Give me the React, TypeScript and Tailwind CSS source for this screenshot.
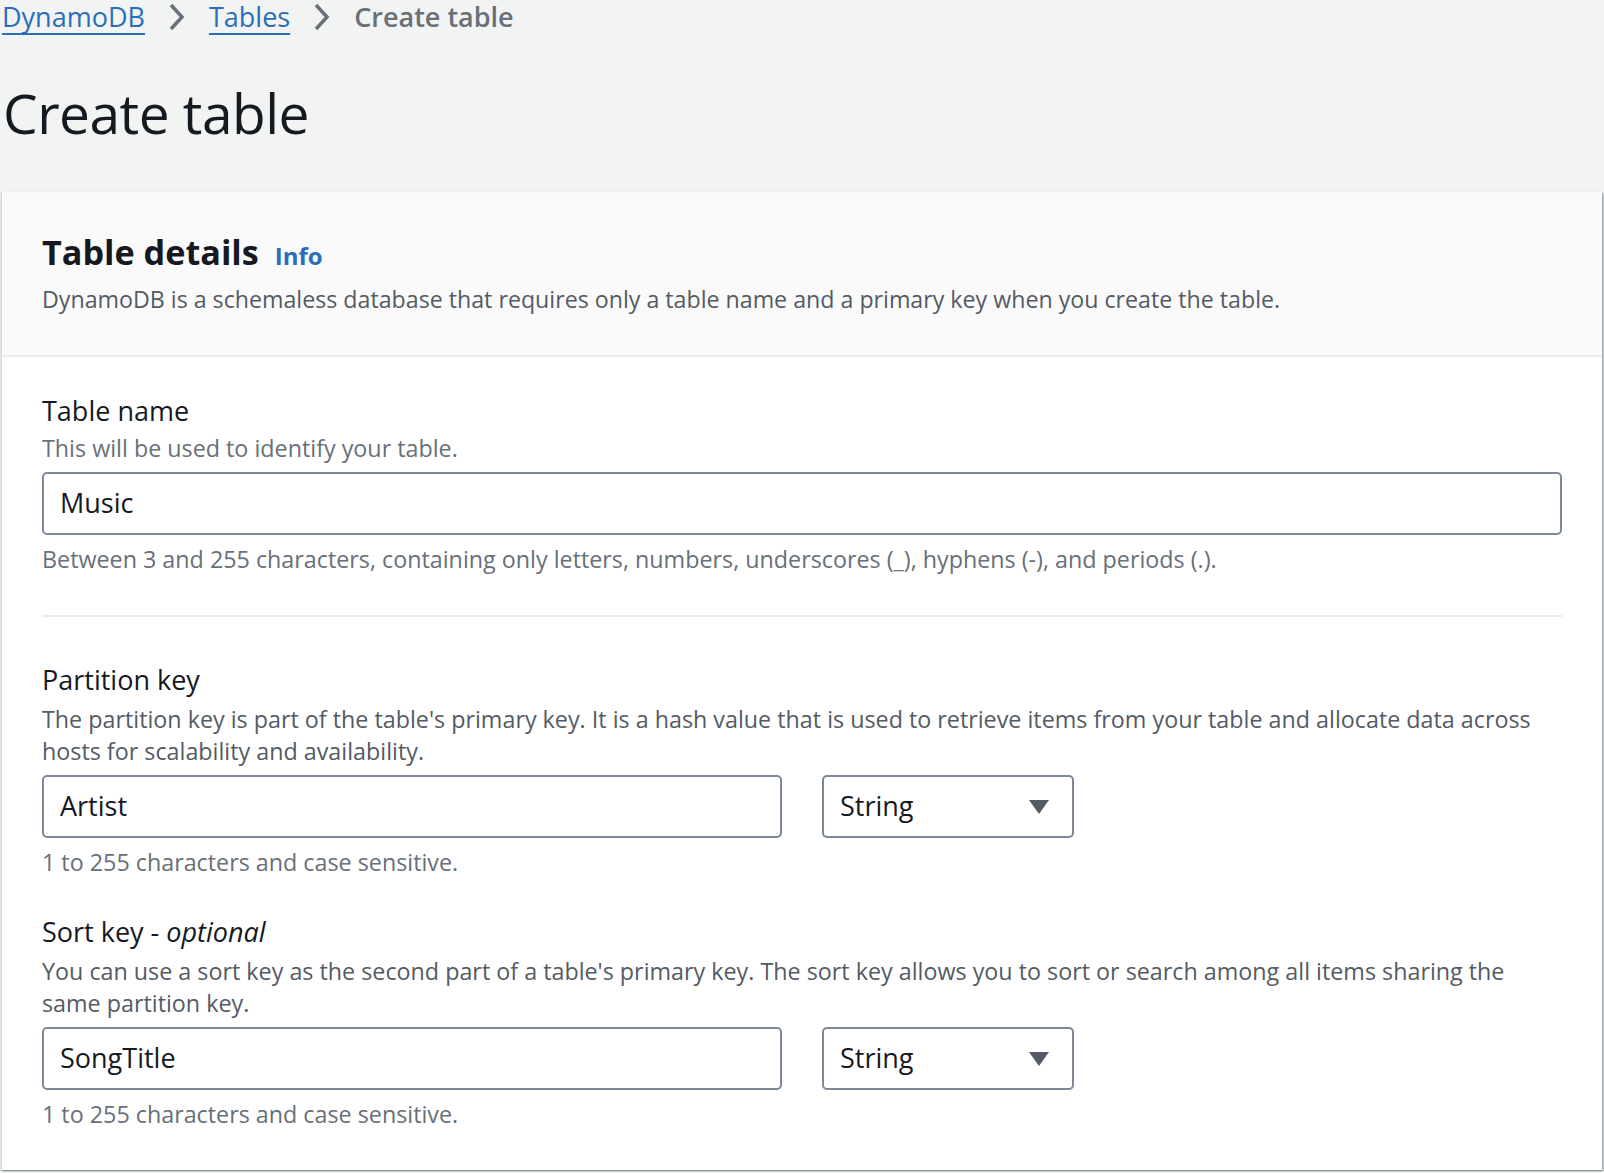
import React from 'react';

const font = { fontFamily: '"Open Sans", "Noto Sans", Arial, sans-serif' };

const Chevron = () => (
  <svg width="20" height="32" viewBox="0 0 20 32" className="shrink-0">
    <path d="M4 4 L15 16 L4 28" fill="none" stroke="#687078" strokeWidth="3.5" />
  </svg>
);

const Caret = () => (
  <svg width="22" height="16" viewBox="0 0 22 16">
    <path d="M1 1 H21 L11 15 Z" fill="#545b64" />
  </svg>
);

const TextInput = ({ value, className = '' }: { value: string; className?: string }) => (
  <div
    className={`h-[63px] border-2 border-[#7d8998] rounded-[5px] bg-white flex items-center px-[16px] text-[27px] text-[#16191f] ${className}`}
  >
    {value}
  </div>
);

const SelectBox = ({ value }: { value: string }) => (
  <div className="h-[63px] w-[252px] border-2 border-[#7d8998] rounded-[5px] bg-white flex items-center justify-between pl-[16px] pr-[22px] text-[27px] text-[#16191f]">
    <span>{value}</span>
    <Caret />
  </div>
);

const KeyField = ({
  label,
  desc,
  value,
}: {
  label: React.ReactNode;
  desc: string;
  value: string;
}) => (
  <div className="flex flex-col">
    <div className="text-[27px] leading-[38px] text-[#16191f]">{label}</div>
    <p className="text-[23.3px] leading-[32px] text-[#545b64] mt-[4px]">{desc}</p>
    <div className="flex gap-[40px] mt-[8px]">
      <TextInput value={value} className="w-[740px]" />
      <SelectBox value="String" />
    </div>
    <p className="text-[23.3px] leading-[32px] text-[#687078] mt-[8px]">1 to 255 characters and case sensitive.</p>
  </div>
);

export default function App() {
  return (
    <div className="min-h-screen bg-[#f2f3f3] overflow-hidden" style={font}>
      {/* breadcrumb */}
      <nav className="flex items-center gap-[22px] h-[34px] px-[2px] text-[27px]">
        <a className="text-[#2a6ebb] underline underline-offset-[6px] decoration-2 leading-[32px]">DynamoDB</a>
        <Chevron />
        <a className="text-[#2a6ebb] underline underline-offset-[6px] decoration-2 leading-[32px]">Tables</a>
        <Chevron />
        <span className="text-[#687078] font-semibold leading-[32px]">Create table</span>
      </nav>

      <h1 className="text-[55px] leading-[72px] text-[#16191f] mt-[43px] px-[3px] -tracking-[0.5px]">Create table</h1>

      <section className="mt-[43px] ml-[1px] w-[1601px] bg-white border-l border-[#d5dbdb] shadow-[2px_1px_2px_rgba(0,28,36,0.3),0_1px_1px_rgba(0,28,36,0.3)] pb-[40px]">
        <header className="bg-[#fafafa] border-b-2 border-[#eaeded] px-[40px] pt-[38px] pb-[38px]">
          <div className="flex items-baseline gap-[16px]">
            <h2 className="text-[34.2px] leading-[44px] font-bold text-[#16191f]">Table details</h2>
            <a className="text-[24px] font-bold text-[#2a6ebb]">Info</a>
          </div>
          <p className="text-[23.2px] leading-[36px] text-[#545b64] mt-[7px]">
            DynamoDB is a schemaless database that requires only a table name and a primary key when you create the table.
          </p>
        </header>

        <div className="px-[40px] pt-[35px]">
          <div className="flex flex-col">
            <div className="text-[27px] leading-[38px] text-[#16191f]">Table name</div>
            <p className="text-[23.3px] leading-[31px] text-[#687078] mt-[3px]">This will be used to identify your table.</p>
            <TextInput value="Music" className="mt-[8px] w-full" />
            <p className="text-[23.3px] leading-[32px] text-[#687078] mt-[8px]">
              Between 3 and 255 characters, containing only letters, numbers, underscores (_), hyphens (-), and periods (.).
            </p>
          </div>

          <div className="border-t-2 border-[#eaeded] mt-[40px] mb-[44px]" />

          <KeyField
            label="Partition key"
            desc="The partition key is part of the table's primary key. It is a hash value that is used to retrieve items from your table and allocate data across hosts for scalability and availability."
            value="Artist"
          />

          <div className="mt-[35px]">
            <KeyField
              label={
                <>
                  Sort key - <i>optional</i>
                </>
              }
              desc="You can use a sort key as the second part of a table's primary key. The sort key allows you to sort or search among all items sharing the same partition key."
              value="SongTitle"
            />
          </div>
        </div>
      </section>
    </div>
  );
}
